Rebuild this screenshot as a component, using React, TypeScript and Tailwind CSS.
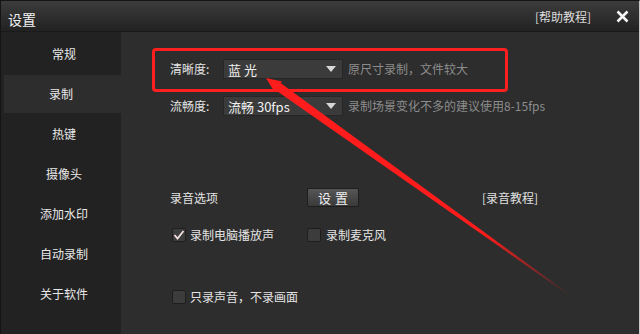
import React from 'react';

const font = { fontFamily: '"Noto Sans CJK SC", "Noto Sans", sans-serif' };

const MENU = ['常规', '录制', '热键', '摄像头', '添加水印', '自动录制', '关于软件'];

function Dropdown({ value }: { value: string }) {
  return (
    <div className="w-[120px] h-[20px] bg-[#3b3b3b] border border-[#262626] flex items-center pl-[4px] pr-[6px] shrink-0">
      <span className="flex-1 text-[13px] text-[#f0f0f0] leading-none whitespace-pre">{value}</span>
      <svg width="10" height="6" viewBox="0 0 10 6">
        <polygon points="0,0 10,0 5,6" fill="#d8d8d8" />
      </svg>
    </div>
  );
}

function Checkbox({ checked }: { checked?: boolean }) {
  return (
    <div className="w-[14px] h-[14px] bg-[#3c3c3c] border border-[#1e1e1e] rounded-[2px] flex items-center justify-center shrink-0">
      {checked && (
        <svg width="12" height="12" viewBox="0 0 12 12">
          <polyline points="1.5,6 4.5,9.5 10.5,2" fill="none" stroke="#f2dede" strokeWidth="1.8" />
        </svg>
      )}
    </div>
  );
}

export default function App() {
  return (
    <div
      className="w-[640px] h-[334px] relative overflow-hidden bg-[#2d2d2d] flex flex-col border-l border-l-[#141414] border-r border-r-[#c8c8c8] border-t border-t-[#151515] select-none"
      style={font}
    >
      {/* title bar */}
      <div className="h-[31px] shrink-0 bg-gradient-to-b from-[#3c3c3c] to-[#222222] border-b border-[#1a1a1a] flex items-center pl-[7px] pr-[10px]">
        <span className="text-[14px] text-[#f2f2f2] flex-1 pt-[6px]">设置</span>
        <span className="text-[12px] text-[#dcdcdc] mr-[25px] pt-[1px]">[帮助教程]</span>
        <svg width="13" height="13" viewBox="0 0 13 13">
          <path d="M1.5 1.5 L11.5 11.5 M11.5 1.5 L1.5 11.5" stroke="#f5f5f5" strokeWidth="2.6" />
        </svg>
      </div>

      <div className="flex flex-1">
        {/* sidebar */}
        <div className="w-[120px] bg-[#222222] pt-[3px] flex flex-col gap-[2px]">
          {MENU.map((m, i) => (
            <div
              key={m}
              className={
                i === 1
                  ? 'h-[38px] ml-[3px] bg-[#2d2d2d] flex items-center justify-center pl-[0px] text-[12px] text-[#e8e8e8]'
                  : 'h-[38px] flex items-center justify-center pl-[6px] text-[12px] text-[#e8e8e8]'
              }
            >
              <span className={i === 1 ? 'pr-[3px]' : ''}>{m}</span>
            </div>
          ))}
        </div>

        {/* content */}
        <div className="flex-1 pl-[49px] pt-[27px] flex flex-col text-[12px] text-[#e4e4e4]">
          <div className="h-[20px] flex items-center">
            <span className="w-[53px]">清晰度:</span>
            <Dropdown value="蓝 光" />
            <span className="ml-[5px] text-[#8c8c8c]">原尺寸录制，文件较大</span>
          </div>
          <div className="h-[20px] flex items-center mt-[17px]">
            <span className="w-[53px]">流畅度:</span>
            <Dropdown value="流畅 30fps" />
            <span className="ml-[5px] text-[#8c8c8c]">录制场景变化不多的建议使用8-15fps</span>
          </div>

          <div className="h-[19px] flex items-center mt-[72px]">
            <span className="w-[137px]">录音选项</span>
            <button className="w-[52px] h-[19px] bg-gradient-to-b from-[#565656] to-[#3a3a3a] border border-[#1e1e1e] rounded-[2px] text-[13px] text-[#f0f0f0] leading-none tracking-[4px] pl-[4px]">
              设置
            </button>
            <span className="ml-[123px] text-[#e0e0e0]">[录音教程]</span>
          </div>

          <div className="h-[20px] flex items-center mt-[18px]">
            <div className="w-[137px] flex items-center pl-[2px] gap-[4px]">
              <Checkbox checked />
              <span>录制电脑播放声</span>
            </div>
            <div className="flex items-center gap-[5px]">
              <Checkbox />
              <span>录制麦克风</span>
            </div>
          </div>

          <div className="h-[20px] flex items-center mt-[42px] pl-[2px] gap-[4px]">
            <Checkbox />
            <span>只录声音，不录画面</span>
          </div>
        </div>
      </div>

      {/* red annotation box */}
      <div className="absolute left-[151px] top-[47px] w-[356px] h-[44px] border-[3px] border-[#ff1f1f] rounded-[4px] pointer-events-none" />

      {/* red annotation arrow */}
      <svg className="absolute left-0 top-0 pointer-events-none" width="640" height="334" viewBox="0 0 640 334">
        <defs>
          <linearGradient id="fade" gradientUnits="userSpaceOnUse" x1="277" y1="86" x2="572" y2="297">
            <stop offset="0" stopColor="#ff1c1c" stopOpacity="1" />
            <stop offset="0.7" stopColor="#ff1c1c" stopOpacity="1" />
            <stop offset="1" stopColor="#ff1c1c" stopOpacity="0" />
          </linearGradient>
        </defs>
        <polygon points="265,77 281,80.5 273.5,91" fill="#ff1c1c" />
        <polygon points="274.5,89 279.5,82 572.3,296.2 571.7,297" fill="url(#fade)" />
      </svg>
    </div>
  );
}
